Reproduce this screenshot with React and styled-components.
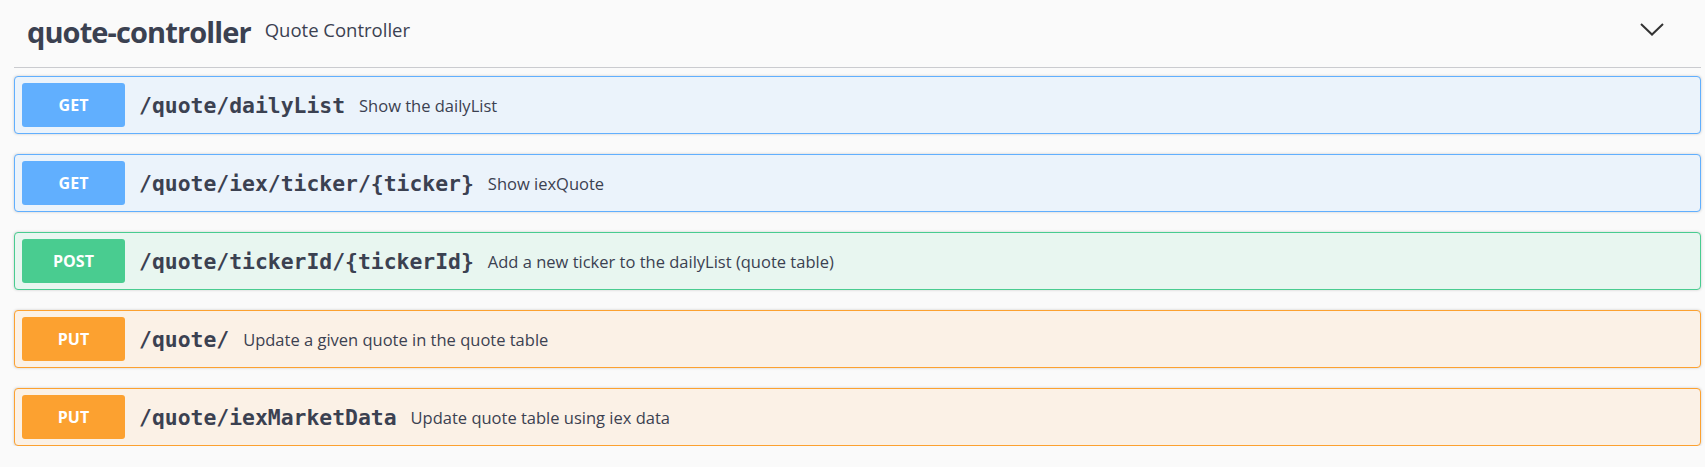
import React from 'react';
import styled, { createGlobalStyle } from 'styled-components';

const GlobalStyle = createGlobalStyle`
  body {
    margin: 0;
    background: #fafafa;
    font-family: "Open Sans", "Noto Sans", sans-serif;
    color: #3b4151;
  }
`;

const methods = {
  get: { color: '#61affe', bg: '#ebf3fb' },
  post: { color: '#49cc90', bg: '#e8f6f0' },
  put: { color: '#fca130', bg: '#fbf1e6' },
};

const operations = [
  { method: 'get', path: '/quote/dailyList', desc: 'Show the dailyList' },
  { method: 'get', path: '/quote/iex/ticker/{ticker}', desc: 'Show iexQuote' },
  { method: 'post', path: '/quote/tickerId/{tickerId}', desc: 'Add a new ticker to the dailyList (quote table)' },
  { method: 'put', path: '/quote/', desc: 'Update a given quote in the quote table' },
  { method: 'put', path: '/quote/iexMarketData', desc: 'Update quote table using iex data' },
];

const App = () => {
  return (
    <>
      <GlobalStyle />
      <Section>
        <TagHeader>
          <TagName>quote-controller</TagName>
          <TagDesc>Quote Controller</TagDesc>
          <Chevron width="24" height="13" viewBox="0 0 24 13">
            <polyline points="1,1 12,11.5 23,1" fill="none" stroke="#333" strokeWidth="2" />
          </Chevron>
        </TagHeader>
        <OpList>
          {operations.map((op, i) => (
            <OpBlock key={i} kind={methods[op.method]}>
              <Method kind={methods[op.method]}>{op.method.toUpperCase()}</Method>
              <Path>{op.path}</Path>
              <Desc>{op.desc}</Desc>
            </OpBlock>
          ))}
        </OpList>
      </Section>
    </>
  );
};

const Section = styled.div`
  padding: 0 4px 0 14px;
`;

const TagHeader = styled.div`
  display: flex;
  align-items: center;
  height: 62px;
  padding: 0 37px 5px 13px;
  border-bottom: 1px solid rgba(59, 65, 81, 0.25);
`;

const TagName = styled.span`
  font-size: 29px;
  font-weight: 700;
  letter-spacing: -0.9px;
  color: #3b4151;
`;

const TagDesc = styled.span`
  font-size: 18.5px;
  margin-left: 14px;
  margin-top: -3px;
  color: #3b4151;
  flex: 1;
`;

const Chevron = styled.svg`
  display: block;
  margin-top: -4px;
`;

const OpList = styled.div`
  display: flex;
  flex-direction: column;
  gap: 20px;
  padding-top: 8px;
`;

const OpBlock = styled.div`
  display: flex;
  align-items: center;
  padding: 6px 7px;
  border: 1px solid ${(p) => p.kind.color};
  border-radius: 4px;
  background: ${(p) => p.kind.bg};
  box-shadow: 0 0 3px rgba(0, 0, 0, 0.19);
`;

const Method = styled.div`
  display: flex;
  align-items: center;
  justify-content: center;
  width: 103px;
  height: 44px;
  border-radius: 3px;
  background: ${(p) => p.kind.color};
  color: #fff;
  font-size: 16px;
  font-weight: 700;
`;

const Path = styled.span`
  margin-left: 14px;
  font-family: "DejaVu Sans Mono", monospace;
  font-size: 21.4px;
  font-weight: 700;
  color: #3b4151;
`;

const Desc = styled.span`
  margin-left: 14px;
  font-size: 16.5px;
  color: #3b4151;
`;

export default App;
